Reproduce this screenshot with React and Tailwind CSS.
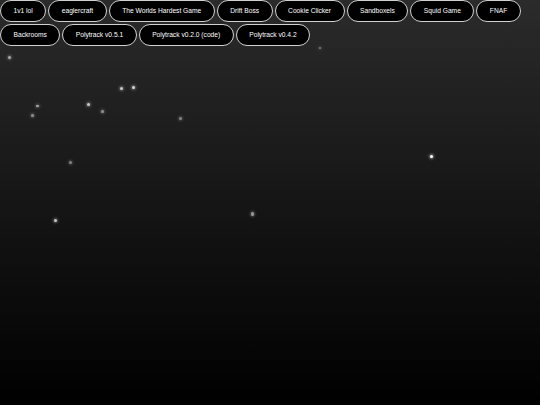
import React from "react";

const games = [
  "1v1 lol",
  "eaglercraft",
  "The Worlds Hardest Game",
  "Drift Boss",
  "Cookie Clicker",
  "Sandboxels",
  "Squid Game",
  "FNAF",
  "Backrooms",
  "Polytrack v0.5.1",
  "Polytrack v0.2.0 (code)",
  "Polytrack v0.4.2",
];

const stars = [
  { x: 9.3, y: 57.3, s: 3, o: 0.6 },
  { x: 121.7, y: 88, s: 3, o: 0.75 },
  { x: 133.7, y: 87, s: 3, o: 0.8 },
  { x: 37.7, y: 106, s: 2.5, o: 0.6 },
  { x: 32, y: 115.7, s: 3, o: 0.5 },
  { x: 88.7, y: 104, s: 3, o: 0.75 },
  { x: 102.7, y: 111, s: 3, o: 0.5 },
  { x: 180.3, y: 118.7, s: 2.5, o: 0.45 },
  { x: 70, y: 162.3, s: 3, o: 0.45 },
  { x: 431.7, y: 156.5, s: 3.5, o: 1 },
  { x: 55.3, y: 220.7, s: 2.5, o: 0.75 },
  { x: 252.7, y: 214, s: 3.5, o: 0.55 },
  { x: 320.3, y: 47.7, s: 2, o: 0.4 },
];

export default function App() {
  return (
    <div
      className="relative w-[540px] h-[405px] overflow-hidden bg-[linear-gradient(to_bottom,#2b2b2b,#000000)]"
      style={{ fontFamily: '"Liberation Sans", Arial, sans-serif' }}
    >
      {stars.map((st, i) => (
        <div
          key={i}
          className="absolute rounded-full bg-white"
          style={{
            left: st.x - st.s / 2,
            top: st.y - st.s / 2,
            width: st.s,
            height: st.s,
            opacity: st.o,
            boxShadow: `0 0 3px 0.5px rgba(255,255,255,0.7)`,
          }}
        />
      ))}
      <div className="relative flex flex-wrap gap-x-[2px] gap-y-[2px]">
        {games.map((g) => (
          <button
            key={g}
            className="h-[22px] px-[12.5px] rounded-[11px] border border-[#d0d0d0] bg-black text-white text-[6.67px] leading-none whitespace-nowrap"
          >
            {g}
          </button>
        ))}
      </div>
    </div>
  );
}
